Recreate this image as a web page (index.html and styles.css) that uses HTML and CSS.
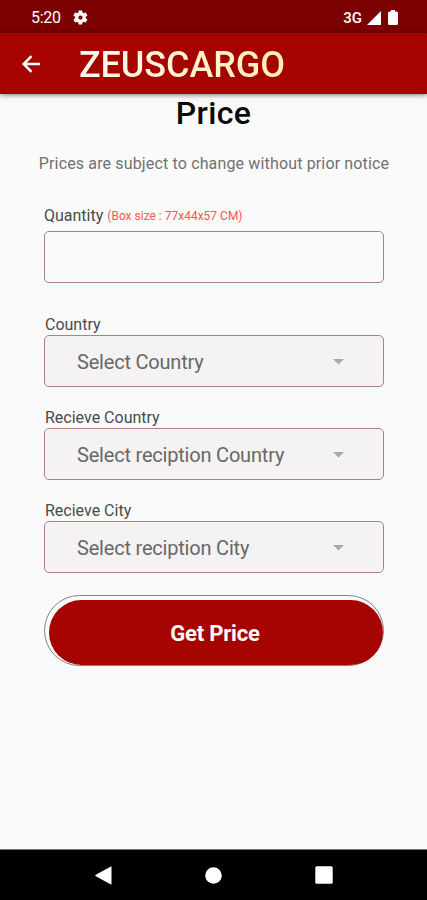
FILE: index.html
```html
<!DOCTYPE html>
<html lang="en">
<head>
  <meta charset="UTF-8" />
  <meta name="viewport" content="width=device-width, initial-scale=1.0"/>
  <title>ZEUSCARGO - Price</title>
  <link rel="stylesheet" href="styles.css">
</head>
<body>
  <div class="statusbar">
    <span class="time">5:20</span>
    <svg class="gear" width="17" height="17" viewBox="0 0 24 24"><path fill="#fff" fill-rule="evenodd" d="M19.4 13c0-.3.1-.6.1-1s0-.7-.1-1l2.1-1.600c.2-.2.2-.4.1-.6l-2-3.500c-.1-.2-.4-.3-.6-.2l-2.500 1c-.5-.4-1.100-.7-1.700-1l-.4-2.600c0-.3-.2-.5-.5-.5h-4c-.3 0-.4.2-.5.5l-.4 2.600c-.6.3-1.100.6-1.700 1l-2.500-1c-.2-.1-.5 0-.6.2l-2 3.500c-.1.2-.1.5.1.6l2.100 1.600c0 .3-.1.700-.1 1s0 .7.100 1l-2.100 1.600c-.2.200-.2.400-.1.600l2 3.500c.1.200.4.300.6.200l2.500-1c.5.400 1.100.7 1.700 1l.4 2.600c0 .300.2.500.5.500h4c.3 0 .5-.2.5-.5l.4-2.600c.6-.3 1.200-.6 1.700-1l2.500 1c.2.100.5 0 .6-.2l2-3.500c.1-.2.100-.5-.1-.6zM12 15a3 3 0 1 1 0-6 3 3 0 0 1 0 6z"/></svg>
    <span class="network">3G</span>
    <svg class="signal" width="14" height="14" viewBox="0 0 14 14"><path fill="#fff" d="M14 0v14H0z"/></svg>
    <svg class="battery" width="10" height="15" viewBox="0 0 10 15"><path fill="#fff" d="M3 0h4v1.500h1.500Q10 1.500 10 3v10.500Q10 15 8.500 15h-7Q0 15 0 13.500V3Q0 1.500 1.500 1.500H3z"/></svg>
  </div>

  <div class="appbar">
    <svg class="back" width="20" height="20" viewBox="0 0 20 20"><path fill="none" stroke="#fff" stroke-width="2.500" d="M19 10H3M10.500 2.200L2.700 10l7.800 7.800"/></svg>
    <span class="brand">ZEUSCARGO</span>
  </div>

  <div class="content">
    <h1 class="title">Price</h1>
    <p class="notice">Prices are subject to change without prior notice</p>

    <form class="form">
      <div class="field quantity">
        <label class="label" for="quantity">Quantity<span class="hint">(Box size : 77x44x57 CM)</span></label>
        <input class="box" type="text" id="quantity">
      </div>

      <div class="field">
        <div class="label">Country</div>
        <div class="box select">
          <span>Select Country</span>
          <svg class="caret" width="11" height="6" viewBox="0 0 11 6"><path fill="#aaa8a8" d="M0 0h11L5.500 5.500z"/></svg>
        </div>
      </div>

      <div class="field">
        <div class="label">Recieve Country</div>
        <div class="box select">
          <span>Select reciption Country</span>
          <svg class="caret" width="11" height="6" viewBox="0 0 11 6"><path fill="#aaa8a8" d="M0 0h11L5.500 5.500z"/></svg>
        </div>
      </div>

      <div class="field">
        <div class="label">Recieve City</div>
        <div class="box select">
          <span>Select reciption City</span>
          <svg class="caret" width="11" height="6" viewBox="0 0 11 6"><path fill="#aaa8a8" d="M0 0h11L5.500 5.500z"/></svg>
        </div>
      </div>

      <div class="button-ring">
        <button class="button" type="button">Get Price</button>
      </div>
    </form>
  </div>

  <div class="navbar">
    <svg width="17" height="19" viewBox="0 0 17 19"><path fill="#fff" d="M15.500.7Q16.500.2 16.500 1.200v16.600q0 1-1 .5L.8 10.200q-1-.7 0-1.400z"/></svg>
    <svg width="17" height="17" viewBox="0 0 17 17"><circle cx="8.500" cy="8.500" r="8.300" fill="#fff"/></svg>
    <svg width="18" height="18" viewBox="0 0 18 18"><rect x=".3" y=".3" width="17.400" height="17.400" rx="1.500" fill="#fff"/></svg>
  </div>
</body>
</html>
```
FILE: styles.css
```css
* {
  box-sizing: border-box;
}

body {
  margin: 0;
  height: 900px;
  display: flex;
  flex-direction: column;
  overflow: hidden;
  background: #fafafa;
  font-family: Roboto, sans-serif;
}

svg {
  display: block;
  flex: none;
}

/* Status bar */
.statusbar {
  display: flex;
  align-items: center;
  height: 33px;
  padding: 2px 29px 0 31px;
  background: #7b0200;
  color: #fff;
  font-size: 16px;
}

.time {
  letter-spacing: -0.3px;
}

.gear {
  margin-left: 11px;
}

.network {
  margin-left: auto;
  font-size: 15px;
  font-weight: 500;
}

.signal {
  margin-left: 5px;
}

.battery {
  margin-left: 7px;
}

/* App bar */
.appbar {
  display: flex;
  align-items: center;
  height: 61px;
  padding-left: 21px;
  background: #a60400;
  box-shadow: 0 1px 5px rgba(0, 0, 0, 0.5);
  z-index: 1;
}

.brand {
  margin-left: 38px;
  padding-top: 2px;
  font-size: 36px;
  line-height: 42px;
  font-weight: 500;
  letter-spacing: -0.1px;
  background: linear-gradient(90deg, #fffaf0, #ffefb8);
  -webkit-background-clip: text;
  background-clip: text;
  color: transparent;
}

.content {
  flex: 1;
}

.title {
  margin: 0;
  height: 38px;
  font-size: 32px;
  line-height: 38px;
  font-weight: 500;
  letter-spacing: 0.4px;
  text-align: center;
  color: #0a0a0a;
}

.notice {
  margin: 22px 0 0;
  height: 20px;
  padding-left: 1px;
  font-size: 16px;
  line-height: 20px;
  letter-spacing: 0.15px;
  text-align: center;
  white-space: nowrap;
  color: #717171;
}

/* Form */
.form {
  width: 340px;
  margin: 31px 0 0 44px;
}

.field {
  display: flex;
  flex-direction: column;
  margin-bottom: 21px;
}

.quantity {
  margin-bottom: 32px;
}

.label {
  display: flex;
  align-items: center;
  height: 20px;
  padding-left: 1px;
  font-size: 16px;
  line-height: 20px;
  white-space: nowrap;
  color: #4a4a4a;
}

.quantity .label {
  height: 26px;
  padding: 0 0 4px;
}

.hint {
  margin-left: 4px;
  font-size: 12px;
  color: #ff5252;
}

.box {
  width: 100%;
  height: 52px;
  padding: 0;
  border: 1px solid #a58488;
  border-radius: 5px;
  background: transparent;
}

.select {
  display: flex;
  align-items: center;
  justify-content: space-between;
  padding: 1px 39px 0 32px;
  background: #f4f2f3;
  color: #686868;
  font-size: 20px;
  letter-spacing: -0.2px;
}

.button-ring {
  height: 71px;
  margin-top: 22px;
  padding: 4px 0 0 4px;
  border: 1px solid #7b8484;
  border-radius: 36px;
}

.button {
  display: block;
  width: 100%;
  height: 65px;
  padding: 2px 2px 0 0;
  border: none;
  border-radius: 33px;
  background: #a60400;
  color: #fff;
  font-family: inherit;
  font-size: 22px;
  font-weight: 700;
  letter-spacing: -0.2px;
}

/* System navigation */
.navbar {
  display: flex;
  align-items: center;
  justify-content: space-between;
  height: 51px;
  padding: 0 94px 0 95px;
  border-top: 1px solid #777;
  background: #000;
}
```
